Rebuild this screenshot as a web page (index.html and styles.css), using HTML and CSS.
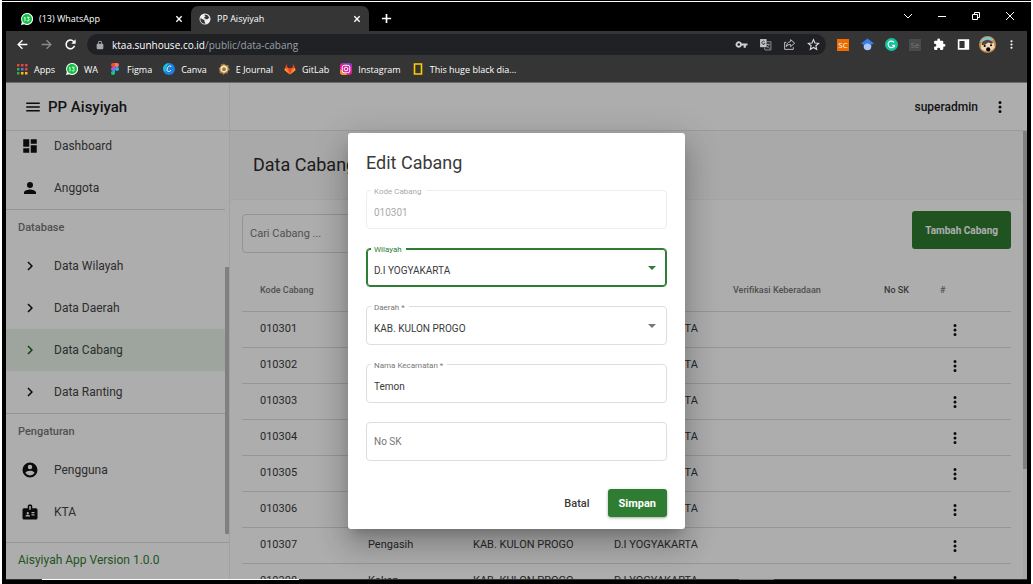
FILE: index.html
```html
<!DOCTYPE html>
<html lang="id">
<head>
<meta charset="utf-8">
<title>PP Aisyiyah</title>
<link rel="stylesheet" href="styles.css">
</head>
<body>
<svg class="defs" aria-hidden="true">
  <symbol id="i-dots" viewBox="0 0 24 24"><path d="M12 8a2 2 0 1 0 0-4 2 2 0 0 0 0 4zm0 2a2 2 0 1 0 0 4 2 2 0 0 0 0-4zm0 6a2 2 0 1 0 0 4 2 2 0 0 0 0-4z"/></symbol>
  <symbol id="i-chevron" viewBox="0 0 24 24"><path d="M10 6 8.600 7.400 13.200 12l-4.600 4.600L10 18l6-6z"/></symbol>
  <symbol id="i-wa" viewBox="0 0 24 24"><path fill="#fff" d="M12 0a12 12 0 0 0-10.300 18L0 24l6.300-1.600A12 12 0 1 0 12 0z"/><circle cx="12" cy="12" r="10" fill="#12c143"/><path d="M8 8.500v8M6.300 9.800 8 8.500M12 8.500h4.500l-2.500 3c4 0 3 4.500 0 4.500-1.200 0-1.800-.5-2.300-1.200" fill="none" stroke="#fff" stroke-width="1.800"/></symbol>
  <symbol id="i-close" viewBox="0 0 12 12"><path d="M2 2l8 8M10 2l-8 8" fill="none" stroke="currentColor" stroke-width="2"/></symbol>
</svg>
<div class="window">
  <header class="tabstrip">
    <div class="tab">
      <svg class="fav"><use href="#i-wa"/></svg>
      <span class="tab-title">(13) WhatsApp</span>
      <button class="tab-close" aria-label="Close tab"><svg class="x"><use href="#i-close"/></svg></button>
    </div>
    <div class="tab active">
      <svg class="fav" viewBox="0 0 24 24"><circle cx="12" cy="12" r="11" fill="#f1f1f1"/><path fill="#35363a" d="M3 10l5 3 3 1v3l2 4-3 .5A10 10 0 0 1 3 10zM12 3l5 1.500 3.500 4.500-3 3-4 1-1-2-3-1 2-2 2-2-3-1z"/></svg>
      <span class="tab-title">PP Aisyiyah</span>
      <button class="tab-close" aria-label="Close tab"><svg class="x"><use href="#i-close"/></svg></button>
    </div>
    <button class="new-tab" aria-label="New tab"><svg class="plus" viewBox="0 0 12 12"><path d="M6 1v10M1 6h10" stroke="#fff" stroke-width="1.800"/></svg></button>
    <div class="controls">
      <button aria-label="Search tabs"><svg viewBox="0 0 12 12"><path d="M2 4l4 4 4-4"/></svg></button>
      <button aria-label="Minimize"><svg viewBox="0 0 12 12"><path d="M2 6.500h8"/></svg></button>
      <button aria-label="Restore"><svg viewBox="0 0 12 12"><path d="M2.500 4.500h5v5h-5zM4.500 4V2.500h5v5H8"/></svg></button>
      <button aria-label="Close"><svg viewBox="0 0 12 12"><path d="M2 2l8 8M10 2l-8 8"/></svg></button>
    </div>
  </header>

  <div class="toolbar">
    <button class="tool" aria-label="Back"><svg viewBox="0 0 24 24" fill="#fff"><path d="M21 10.800H7l5.800-5.800L11 3.200 2.200 12l8.800 8.800 1.800-1.800L7 13.200h14z"/></svg></button>
    <button class="tool" aria-label="Forward"><svg viewBox="0 0 24 24" fill="#8a8a8a"><path d="M3 10.800h14l-5.800-5.800L13 3.200l8.800 8.800-8.800 8.800-1.800-1.800 5.800-5.800H3z"/></svg></button>
    <button class="tool" aria-label="Reload"><svg viewBox="0 0 24 24"><path d="M19.500 14.500a8 8 0 1 1-1.800-8.200l2.300 2.300" fill="none" stroke="#fff" stroke-width="2.800"/><path d="M21.500 2.500v8h-8z" fill="#fff"/></svg></button>
    <div class="omnibox">
      <svg class="lock" viewBox="0 0 24 24" fill="#a5a8ac"><path d="M18 9h-1V7A5 5 0 0 0 7 7v2H6a2 2 0 0 0-2 2v9c0 1 1 2 2 2h12c1 0 2-1 2-2v-9a2 2 0 0 0-2-2zM9 7a3 3 0 0 1 6 0v2H9z"/></svg>
      <span class="url"><b>ktaa.sunhouse.co.id</b>/public/data-cabang</span>
      <button class="tool" aria-label="Passwords"><svg viewBox="0 0 24 24" fill="#d0d0d0"><path d="M12.600 10a6 6 0 1 0 0 4H16v4h4v-4h3v-4zM7 14.500a2.500 2.500 0 1 1 0-5 2.500 2.500 0 0 1 0 5z"/></svg></button>
      <button class="tool" aria-label="Translate"><svg viewBox="0 0 24 24"><path d="M2 2h12v15H2z" fill="#c4c6c8"/><path d="M13 7h9v15H11l-1-4M13 12h7M16.500 10v2M19 12c-1 3-3 5-5 6M14 14c1 2 3 4 6 5" fill="none" stroke="#9b9da0" stroke-width="1.600"/><path d="M10.500 6.800A3 3 0 1 0 11 10H8.500" fill="none" stroke="#303134" stroke-width="1.600"/></svg></button>
      <button class="tool" aria-label="Share"><svg viewBox="0 0 24 24" fill="none" stroke="#c8c8c8" stroke-width="1.700"><path d="M6 8H3v13h16v-4M14 3l7.500 6.500L14 16v-4c-4 0-6 1-8 4 .5-5 3-8.500 8-9.500z"/></svg></button>
      <button class="tool" aria-label="Bookmark"><svg viewBox="0 0 24 24" fill="none" stroke="#e0e0e0" stroke-width="2"><path d="M12 3l2.700 6.200 6.800.6-5.100 4.500 1.500 6.600L12 17.400l-5.900 3.500 1.500-6.600-5.100-4.500 6.800-.6z"/></svg></button>
    </div>
    <button class="tool sc" aria-label="SC extension"><span>SC</span></button>
    <button class="tool" aria-label="Scholar"><svg viewBox="0 0 24 24"><circle cx="12" cy="15.500" r="7" fill="#a9c8f7"/><path fill="#3b7de8" d="M12 1 0 10l6 3c3-4 9-4 12 0l6-3z"/></svg></button>
    <button class="tool" aria-label="Grammarly"><svg viewBox="0 0 24 24"><circle cx="12" cy="12" r="12" fill="#15c39a"/><path d="M16.500 8a6 6 0 1 0 1 5.500h-4M17.500 13v4" fill="none" stroke="#fff" stroke-width="2.200"/></svg></button>
    <button class="tool se" aria-label="Selenium"><span>Se</span></button>
    <button class="tool" aria-label="Extensions"><svg viewBox="0 0 24 24" fill="#fff"><path d="M20.500 11H19V7a2 2 0 0 0-2-2h-4V3.500a2.500 2.500 0 0 0-5 0V5H4a2 2 0 0 0-2 2v3.800h1.500a2.700 2.700 0 0 1 0 5.400H2V20c0 1.100.9 2 2 2h3.800v-1.500a2.700 2.700 0 0 1 5.400 0V22H17a2 2 0 0 0 2-2v-4h1.500a2.500 2.500 0 0 0 0-5z"/></svg></button>
    <button class="tool" aria-label="Side panel"><svg viewBox="0 0 24 24"><path d="M3 4h18v16H3z" fill="none" stroke="#fff" stroke-width="3"/><path d="M14 4h7v16h-7z" fill="#fff"/></svg></button>
    <button class="tool avatar" aria-label="Profile"><svg viewBox="0 0 24 24"><circle cx="12" cy="12" r="12" fill="#c98b45"/><path d="M2 7a12 12 0 0 1 19-2l-4 2-8-1-6 4z" fill="#7fc4cf"/><path d="M3 11c2-6 14-8 18-1l1 6c-4 7-14 7-19 2z" fill="#efd6b8"/><path d="M4 9c5-5 11-5 16 0l-2 2-5-2-4 3-5 1z" fill="#5a4636"/><circle cx="8" cy="14" r="1.500"/><circle cx="17" cy="13" r="1.500"/><ellipse cx="13" cy="19" rx="3" ry="3"/></svg></button>
    <button class="tool" aria-label="Menu"><svg fill="#fff"><use href="#i-dots"/></svg></button>
  </div>

  <nav class="bookmarks">
    <a href="#"><svg viewBox="0 0 12 12"><path fill="#e8453c" d="M1 1h2.500v2.500H1zM5 1h2.500v2.500H5zM9 1h2.500v2.500H9z"/><path fill="#34a853" d="M1 5h2.500v2.500H1z"/><path fill="#4285f4" d="M5 5h2.500v2.500H5z"/><path fill="#e8453c" d="M9 5h2.500v2.500H9z"/><path fill="#34a853" d="M1 9h2.500v2.500H1z"/><path fill="#fbbc05" d="M5 9h2.500v2.500H5zM9 9h2.500v2.500H9z"/></svg>Apps</a>
    <a href="#"><svg><use href="#i-wa"/></svg>WA</a>
    <a href="#"><svg viewBox="0 0 12 12"><path fill="#f24e1e" d="M6 0H4a2 2 0 0 0 0 4h2z"/><path fill="#ff7262" d="M6 0h2a2 2 0 0 1 0 4H6z"/><path fill="#a259ff" d="M6 4H4a2 2 0 0 0 0 4h2z"/><circle cx="8" cy="6" r="2" fill="#1abcfe"/><path fill="#0acf83" d="M6 8H4a2 2 0 1 0 2 2z"/></svg>Figma</a>
    <a href="#"><svg viewBox="0 0 24 24"><circle cx="12" cy="12" r="12" fill="#1d7fe0"/><path fill="#16c1d0" d="M0 12A12 12 0 0 1 12 0C8 6 5 10 5 19a12 12 0 0 1-5-7z"/><path d="M16 8c0-3-3-3-5-1-4 4-4 10 0 10 2 0 4-1 5-3" fill="none" stroke="#fff" stroke-width="2"/></svg>Canva</a>
    <a href="#"><svg viewBox="0 0 24 24"><path fill="#a17a3a" d="M12 1l4 3 5 0 0 5 3 4-4 3-1 5-5 0-3 3-3-3-5-1 0-5-2-4 4-3 1-5z"/><path fill="#f2e2bd" d="M12 4l7 4 0 8-7 4-7-4 0-8z"/><path fill="#a17a3a" d="M12 8l4 3-1 5H9l-1-5z"/></svg>E Journal</a>
    <a href="#"><svg viewBox="0 0 24 24"><path fill="#e24329" d="M12 23 1 14 4.500 2 8 10h8l3.500-8L23 14z"/><path fill="#fc6d26" d="M12 23 8 10H2l-1 4zM12 23l4-13h6l1 4z"/><path fill="#fca326" d="M12 23 1 14l2-3zM12 23l11-9-2-3z"/></svg>GitLab</a>
    <a href="#"><svg viewBox="0 0 24 24"><rect width="24" height="24" rx="6" fill="#d6249f"/><path fill="#7b3fd0" d="M6 0h12a6 6 0 0 1 6 6L6 2z"/><path fill="#fd8d32" d="M0 12v6a6 6 0 0 0 6 6h9z"/><rect x="4.500" y="4.500" width="15" height="15" rx="4" fill="none" stroke="#fff" stroke-width="2"/><circle cx="12" cy="12" r="3.700" fill="none" stroke="#fff" stroke-width="2"/></svg>Instagram</a>
    <a href="#"><svg viewBox="0 0 12 12"><path d="M2.500 1h7v10h-7z" fill="none" stroke="#fc0" stroke-width="1.600"/></svg>This huge black dia...</a>
  </nav>

  <div class="app">
    <aside class="sidebar">
      <div class="brand">
        <button class="plain" aria-label="Menu"><svg class="ic" viewBox="0 0 24 24"><path d="M3 6h18v2H3zM3 11h18v2H3zM3 16h18v2H3z"/></svg></button>
        <span>PP Aisyiyah</span>
      </div>
      <div class="side-body">
        <nav class="menu">
          <div class="menu-scroll">
            <a class="item" href="#"><svg class="ic" viewBox="0 0 24 24"><path d="M3 13h8V3H3zm0 8h8v-6H3zm10 0h8V11h-8zm0-18v6h8V3z"/></svg>Dashboard</a>
            <a class="item" href="#"><svg class="ic" viewBox="0 0 24 24"><path d="M12 12a4 4 0 1 0 0-8 4 4 0 0 0 0 8zm0 2c-2.700 0-8 1.300-8 4v2h16v-2c0-2.700-5.300-4-8-4z"/></svg>Anggota</a>
            <h2 class="group">Database</h2>
            <a class="item" href="#"><svg class="ic"><use href="#i-chevron"/></svg>Data Wilayah</a>
            <a class="item" href="#"><svg class="ic"><use href="#i-chevron"/></svg>Data Daerah</a>
            <a class="item selected" href="#"><svg class="ic"><use href="#i-chevron"/></svg>Data Cabang</a>
            <a class="item" href="#"><svg class="ic"><use href="#i-chevron"/></svg>Data Ranting</a>
            <h2 class="group">Pengaturan</h2>
            <a class="item" href="#"><svg class="ic" viewBox="0 0 24 24"><path d="M12 2a10 10 0 1 0 0 20 10 10 0 0 0 0-20zm0 3a3 3 0 1 1 0 6 3 3 0 0 1 0-6zm0 14.200a7.200 7.200 0 0 1-6-3.200c0-2 4-3.100 6-3.100s6 1.100 6 3.100a7.200 7.200 0 0 1-6 3.200z"/></svg>Pengguna</a>
            <a class="item" href="#"><svg class="ic" viewBox="0 0 24 24"><path fill-rule="evenodd" d="M20 7h-5V4a2 2 0 0 0-2-2h-2a2 2 0 0 0-2 2v3H4a2 2 0 0 0-2 2v11c0 1.100.9 2 2 2h16a2 2 0 0 0 2-2V9a2 2 0 0 0-2-2zM9 12a1.500 1.500 0 1 1 0 3 1.500 1.500 0 0 1 0-3zm3 6H6v-.8c0-1 2-1.500 3-1.500s3 .5 3 1.500zm1-9h-2V4h2zm5 7.500h-4V15h4zm0-3h-4V12h4z"/></svg>KTA</a>
          </div>
        </nav>
        <div class="side-bar"></div>
      </div>
      <footer class="version">Aisyiyah App Version 1.0.0</footer>
    </aside>

    <div class="page">
      <header class="topbar">
        <span>superadmin</span>
        <button class="plain" aria-label="Account menu"><svg class="ic"><use href="#i-dots"/></svg></button>
      </header>
      <div class="scroller">
        <main class="content">
          <h1>Data Cabang</h1>
          <section class="panel">
            <div class="actions">
              <input class="search" type="text" placeholder="Cari Cabang ..." aria-label="Cari Cabang">
              <button class="add">Tambah Cabang</button>
            </div>
            <table>
              <colgroup><col class="c-code"><col class="c-name"><col class="c-area"><col class="c-region"><col class="c-check"><col class="c-sk"><col></colgroup>
              <thead><tr><th>Kode Cabang</th><th>Kecamatan</th><th>Daerah</th><th>Wilayah</th><th>Verifikasi Keberadaan</th><th class="dark">No SK</th><th>#</th></tr></thead>
              <tbody>
                <tr><td>010301</td><td>Temon</td><td>KAB. KULON PROGO</td><td>D.I YOGYAKARTA</td><td></td><td></td><td><button class="plain row-menu" aria-label="Aksi"><svg class="ic"><use href="#i-dots"/></svg></button></td></tr>
                <tr><td>010302</td><td>Wates</td><td>KAB. KULON PROGO</td><td>D.I YOGYAKARTA</td><td></td><td></td><td><button class="plain row-menu" aria-label="Aksi"><svg class="ic"><use href="#i-dots"/></svg></button></td></tr>
                <tr><td>010303</td><td>Panjatan</td><td>KAB. KULON PROGO</td><td>D.I YOGYAKARTA</td><td></td><td></td><td><button class="plain row-menu" aria-label="Aksi"><svg class="ic"><use href="#i-dots"/></svg></button></td></tr>
                <tr><td>010304</td><td>Galur</td><td>KAB. KULON PROGO</td><td>D.I YOGYAKARTA</td><td></td><td></td><td><button class="plain row-menu" aria-label="Aksi"><svg class="ic"><use href="#i-dots"/></svg></button></td></tr>
                <tr><td>010305</td><td>Lendah</td><td>KAB. KULON PROGO</td><td>D.I YOGYAKARTA</td><td></td><td></td><td><button class="plain row-menu" aria-label="Aksi"><svg class="ic"><use href="#i-dots"/></svg></button></td></tr>
                <tr><td>010306</td><td>Sentolo</td><td>KAB. KULON PROGO</td><td>D.I YOGYAKARTA</td><td></td><td></td><td><button class="plain row-menu" aria-label="Aksi"><svg class="ic"><use href="#i-dots"/></svg></button></td></tr>
                <tr><td>010307</td><td>Pengasih</td><td>KAB. KULON PROGO</td><td>D.I YOGYAKARTA</td><td></td><td></td><td><button class="plain row-menu" aria-label="Aksi"><svg class="ic"><use href="#i-dots"/></svg></button></td></tr>
                <tr><td>010308</td><td>Kokap</td><td>KAB. KULON PROGO</td><td>D.I YOGYAKARTA</td><td></td><td></td><td><button class="plain row-menu" aria-label="Aksi"><svg class="ic"><use href="#i-dots"/></svg></button></td></tr>
              </tbody>
            </table>
          </section>
        </main>
        <div class="main-bar"></div>
      </div>
    </div>

    <div class="backdrop">
      <form class="dialog" role="dialog" aria-labelledby="dlg-title">
        <h2 id="dlg-title">Edit Cabang</h2>
        <div class="field disabled"><label for="kode">Kode Cabang</label><input id="kode" type="text" value="010301" disabled></div>
        <div class="field focused pick"><label for="wilayah">Wilayah</label><select id="wilayah"><option>D.I YOGYAKARTA</option></select></div>
        <div class="field pick"><label for="daerah">Daerah *</label><select id="daerah"><option>KAB. KULON PROGO</option></select></div>
        <div class="field"><label for="nama">Nama Kecamatan *</label><input id="nama" type="text" value="Temon"></div>
        <div class="field empty"><input type="text" placeholder="No SK" aria-label="No SK"></div>
        <div class="dialog-actions">
          <button type="button" class="cancel">Batal</button>
          <button type="button" class="save">Simpan</button>
        </div>
      </form>
    </div>
  </div>
  <div class="edge"><i class="seg-a"></i><i class="seg-b"></i><i class="seg-c"></i><i class="seg-d"></i><i class="seg-e"></i></div>
</div>
</body>
</html>
```

FILE: styles.css
```css
* { box-sizing: border-box; }
html, body { height: 100%; }
body { margin: 0; background: #fff; font-family: Roboto, "Liberation Sans", sans-serif; overflow: hidden; }
button, input, select { font: inherit; color: inherit; margin: 0; }
button { border: 0; padding: 0; background: none; cursor: pointer; }
a { color: inherit; text-decoration: none; }
.defs { position: absolute; width: 0; height: 0; }
.window {
  height: 100vh; margin: 0 2px; padding: 1px 4px 4px; background: #000;
  display: flex; flex-direction: column; border-top: 1px solid #000;
  box-shadow: inset 0 1px 0 #fff;
}

/* browser chrome */
.tabstrip, .toolbar, .bookmarks { font-family: "Open Sans", "Noto Sans", sans-serif; font-size: 9px; color: #fff; flex: none; display: flex; align-items: center; }
.tabstrip { height: 29px; padding: 4px 0 0 7px; align-items: stretch; }
.tab { width: 178px; display: flex; align-items: center; gap: 6px; padding: 0 7px 0 8px; border-radius: 7px 7px 0 0; }
.tab.active { background: #353535; }
.fav { width: 12px; height: 12px; }
.tab-title { flex: 1; }
.tab-close, .new-tab { display: grid; place-items: center; }
.tab-close { width: 10px; height: 10px; }
.x { width: 8px; height: 8px; }
.new-tab { width: 34px; }
.plus { width: 11px; height: 11px; }
.controls { margin-left: auto; display: flex; }
.controls button { width: 34px; display: grid; place-items: center; padding-bottom: 5px; }
.controls svg { width: 12px; height: 12px; fill: none; stroke: #fff; stroke-width: 1; }
.toolbar { height: 27px; background: #353535; padding: 0 4px; }
.tool { width: 24px; height: 20px; display: grid; place-items: center; flex: none; }
.tool svg { width: 13px; height: 13px; }
.omnibox { flex: 1; height: 21px; margin: 0 5px 0 5px; border-radius: 11px; background: #202124; display: flex; align-items: center; padding: 0 1px 0 8px; }
.lock { width: 10px; height: 10px; margin-right: 7px; }
.url { flex: 1; font-size: 10px; color: #9aa0a6; }
.url b { font-weight: 400; color: #fff; }
.sc span, .se span { display: grid; place-items: center; width: 12px; height: 12px; font-size: 8px; line-height: 12px; background: #ef6c00; }
.se span { background: #4a4a4a; color: #777; }
.avatar svg { width: 17px; height: 17px; }
.bookmarks { height: 25px; background: #353535; padding: 0 10px 2px; gap: 11px; border-bottom: 1px solid #6b6b6b; }
.bookmarks a { display: flex; align-items: center; gap: 6px; white-space: nowrap; }
.bookmarks svg { width: 12px; height: 12px; }

/* application */
.app { position: relative; flex: 1; min-height: 0; display: flex; background: #fff; color: #1c1c1e; overflow: hidden; }
.ic { width: 18px; height: 18px; fill: #111; display: block; }
.sidebar { width: 224px; flex: none; display: flex; flex-direction: column; border-right: 1px solid #eee; }
.brand { height: 48px; flex: none; display: flex; align-items: center; gap: 6px; padding-left: 18px; border-bottom: 1px solid #e6e6e6; font-size: 15px; font-weight: 500; }
.side-body { flex: 1; min-height: 0; display: flex; }
.menu { flex: 1; overflow: hidden; }
.menu-scroll { margin-top: -6px; }
.item { height: 42px; display: flex; align-items: center; gap: 15px; padding-left: 15px; font-size: 12px; color: #444; }
.item.selected { background: #e7f3e9; }
.item.selected .ic { fill: #1b5e20; }
.group { margin: 0; height: 36px; border-top: 1px solid #d9d9d9; padding-left: 12px; font-size: 11px; line-height: 35px; font-weight: 500; color: #777; }
.side-bar { width: 4px; background: linear-gradient(#bdbdbd, #bdbdbd) bottom 8px left 0 / 4px 65% no-repeat; }
.version { height: 37px; flex: none; border-top: 1px solid #ddd; padding-left: 12px; font-size: 12px; line-height: 35px; color: #2e7d32; }
.page { flex: 1; min-width: 0; display: flex; flex-direction: column; }
.topbar { height: 48px; flex: none; display: flex; align-items: center; justify-content: flex-end; gap: 13px; padding-right: 18px; border-bottom: 1px solid #e6e6e6; font-size: 12px; font-weight: 500; }
.scroller { flex: 1; min-height: 0; display: flex; background: #fafafa; }
.content { flex: 1; min-width: 0; overflow: hidden; }
.main-bar { width: 4px; background: linear-gradient(#bdbdbd, #bdbdbd) top left / 4px 338px no-repeat #f6f6f6; }
h1 { margin: 0; padding-left: 23px; font-size: 18px; line-height: 68px; font-weight: 400; color: #2c2c2c; }
.panel { background: #fff; border-top: 1px solid #f2f2f2; border-radius: 4px; padding: 11px 12px 0; }
.actions { display: flex; align-items: center; justify-content: space-between; height: 44px; }
.search { width: 225px; height: 39px; border: 1px solid #d9d9d9; border-radius: 4px; background: none; padding: 0 7px; font-size: 11px; }
.search::placeholder { color: #777; opacity: 1; }
.add { height: 38px; padding: 0 13px; border-radius: 3px; background: #2e7d32; color: #fff; font-size: 10px; font-weight: 700; align-self: flex-start; }
table { width: 100%; margin-top: 13px; border-collapse: separate; border-spacing: 0; table-layout: fixed; }
.c-code { width: 108px; } .c-name { width: 105px; } .c-area { width: 141px; } .c-region { width: 119px; } .c-check { width: 151px; } .c-sk { width: 56px; }
th, td { padding: 0 0 0 18px; text-align: left; white-space: nowrap; border-bottom: 1px solid #dedede; }
th { height: 44px; font-size: 9px; font-weight: 500; color: #777; }
th.dark { color: #555; }
td { height: 36px; padding-bottom: 3px; font-size: 11px; color: #3a3a3a; }
.row-menu { width: 30px; padding-top: 3px; display: grid; place-items: center; }

/* dialog */
.backdrop { position: absolute; inset: 0; display: flex; align-items: center; justify-content: center; background: rgba(0, 0, 0, .32); }
.dialog { width: 337px; border-radius: 3px; background: #fff; padding: 18px 18px 12px; display: flex; flex-direction: column; gap: 19px; color: #3a3a3a;
  box-shadow: 0 8px 11px -5px rgba(0,0,0,.2), 0 18px 28px 2px rgba(0,0,0,.14), 0 7px 34px 6px rgba(0,0,0,.12); }
.dialog h2 { margin: 0; font-size: 18px; line-height: 24px; font-weight: 400; margin-bottom: -4px; }
.field { position: relative; height: 39px; border: 1px solid #dedede; border-radius: 4px; display: flex; font-size: 10px; }
.field label { position: absolute; left: 4px; top: -5px; padding: 0 4px 0 3px; background: #fff; font-size: 8px; line-height: 11px; color: #777; }
.field input, .field select { flex: 1; min-width: 0; appearance: none; border: 0; outline: 0; background: none; padding: 5px 7px 0; }
.field.empty input { padding-top: 0; }
.field input::placeholder { color: #777; opacity: 1; }
.field.disabled { border-color: #ededed; }
.field.disabled label, .field.disabled input { color: #aaa; }
.field.focused { border-color: #2e7d32; box-shadow: inset 0 0 0 1px #2e7d32; }
.field.focused label { color: #2e7d32; }
.pick::after { content: ""; position: absolute; right: 10px; top: 17px; border: 4px solid transparent; border-top-color: #777; border-bottom: 0; }
.pick.focused::after { border-top-color: #2e7d32; }
.dialog-actions { display: flex; justify-content: flex-end; gap: 7px; padding-top: 9px; font-size: 11px; font-weight: 500; }
.dialog-actions button { height: 28px; padding: 0 11px; border-radius: 3px; }
.dialog-actions .save { background: #2e7d32; color: #fff; font-weight: 700; box-shadow: 0 1px 3px rgba(0, 0, 0, .35); }

/* taskbar edge */
.edge { height: 1px; flex: none; display: flex; background: #333; }
.seg-a { flex: 36; } .seg-b { flex: 257; background: #fff; } .seg-c { flex: 440; } .seg-d { flex: 35; background: #777; } .seg-e { flex: 253; }
```
